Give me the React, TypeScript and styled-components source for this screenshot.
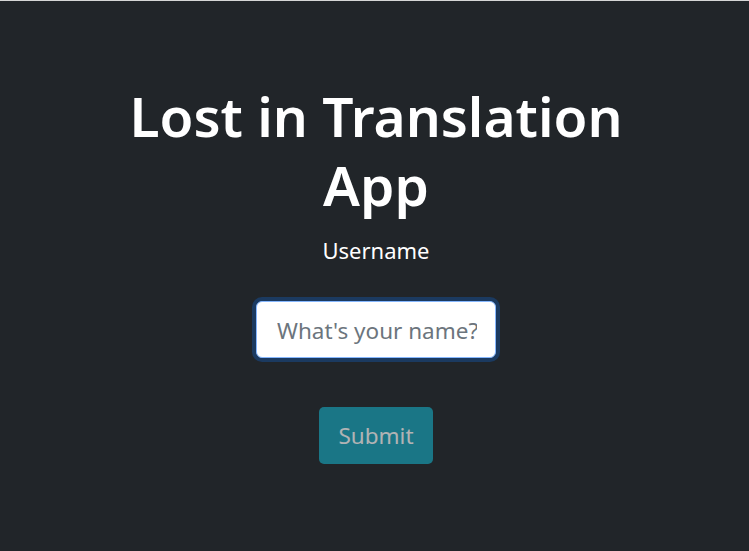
import React from "react";
import styled, { createGlobalStyle } from "styled-components";

const Global = createGlobalStyle`
  html, body { margin: 0; padding: 0; background: #212529; }
  body { font-family: "Noto Sans", "Open Sans", sans-serif; color: #fff; }
  * { box-sizing: border-box; }
`;

const Page = styled.main`
  min-height: 551px;
  background: #212529;
  border-top: 1px solid #d6d6d6;
  display: flex;
  flex-direction: column;
  align-items: center;
  padding-top: 80px;
  padding-left: 3px;
`;

const Title = styled.h1`
  margin: 0;
  width: 520px;
  text-align: center;
  font-size: 55px;
  font-weight: 600;
  line-height: 69px;
  color: #fff;
`;

const Form = styled.form`
  display: flex;
  flex-direction: column;
  align-items: center;
`;

const Label = styled.label`
  font-size: 22px;
  line-height: 30px;
  margin-top: 16px;
`;

const Input = styled.input`
  margin-top: 36px;
  width: 240px;
  height: 57px;
  padding: 1px 18px 0 20px;
  font-family: inherit;
  font-size: 22.5px;
  color: #212529;
  background: #fff;
  border: 1px solid #86b7fe;
  border-radius: 6px;
  box-shadow: 0 0 0 4px #1b3a60;
  outline: none;
  &::placeholder { color: #6c757d; }
`;

const Button = styled.button`
  margin-top: 49px;
  width: 114px;
  height: 57px;
  font-family: inherit;
  font-size: 22.5px;
  color: #fff;
  background: #17a2b8;
  border: none;
  border-radius: 5px;
  opacity: 0.65;
`;

export default function App() {
  return (
    <>
      <Global />
      <Page>
        <Title>Lost in Translation App</Title>
        <Form onSubmit={(e) => e.preventDefault()}>
          <Label htmlFor="username">Username</Label>
          <Input id="username" placeholder="What's your name?" autoFocus />
          <Button type="submit" disabled>Submit</Button>
        </Form>
      </Page>
    </>
  );
}
